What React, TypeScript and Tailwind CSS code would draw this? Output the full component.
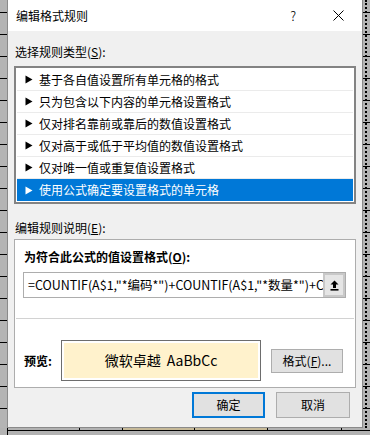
import React from "react";

const FONT = { fontFamily: '"Noto Sans CJK SC", "Microsoft YaHei", sans-serif' };

const items = [
  "基于各自值设置所有单元格的格式",
  "只为包含以下内容的单元格设置格式",
  "仅对排名靠前或靠后的数值设置格式",
  "仅对高于或低于平均值的数值设置格式",
  "仅对唯一值或重复值设置格式",
  "使用公式确定要设置格式的单元格",
];

function Tri({ white }: { white?: boolean }) {
  return (
    <svg width="8" height="9" viewBox="0 0 8 9" className="shrink-0">
      <polygon points="0.5,0.5 7.5,4.5 0.5,8.5" fill={white ? "#ffffff" : "#000000"} />
    </svg>
  );
}

export default function App() {
  return (
    <div
      className="w-[370px] h-[435px] bg-[#b2b2b2] flex flex-col overflow-hidden text-[12px] text-black"
      style={FONT}
    >
      <div className="flex h-[428px]">
        {/* left sheet strip */}
        <div className="w-[7px] h-full bg-[repeating-linear-gradient(to_bottom,transparent_0,transparent_12px,#000_12px,#000_13px,transparent_13px,transparent_22px)] bg-[#b4b4b4]" />
        {/* dialog */}
        <div className="w-[356px] h-full flex flex-col border-x border-b border-[#8a8a8a] bg-[#f0f0f0]">
          {/* title bar */}
          <div className="h-[31px] bg-white flex items-center pl-[8px] pr-[18px]">
            <span className="leading-none">编辑格式规则</span>
            <span className="ml-auto mr-[37px] text-[13px] leading-none font-light">?</span>
            <svg width="11" height="11" viewBox="0 0 11 11">
              <path d="M0.5 0.5 L10.5 10.5 M10.5 0.5 L0.5 10.5" stroke="#000" strokeWidth="1" />
            </svg>
          </div>
          {/* body */}
          <div className="flex flex-col pl-[6px]">
            <div className="mt-[11px] h-[20px] leading-[20px] pl-[1px]">
              选择规则类型(<span className="underline">S</span>):
            </div>
            <div className="mt-[4px] w-[342px] border-2 border-[#838383] bg-white p-[1px] flex flex-col">
              {items.map((t, i) => {
                const sel = i === items.length - 1;
                return (
                  <div
                    key={t}
                    className={
                      sel
                        ? "h-[22px] flex items-center gap-[6px] pl-[8px] bg-[#0078d7] text-white"
                        : "h-[22px] flex items-center gap-[6px] pl-[8px] border-b border-[#ebebeb]"
                    }
                  >
                    <Tri white={sel} />
                    <span className="leading-none">{t}</span>
                  </div>
                );
              })}
            </div>
            <div className="mt-[14px] h-[20px] leading-[20px] pl-[1px]">
              编辑规则说明(<span className="underline">E</span>):
            </div>
            <div className="mt-[1px] w-[342px] h-[149px] border border-[#adadad] bg-white flex flex-col px-[8px]">
              <div className="mt-[7px] h-[20px] leading-[20px] font-bold pl-[1px]">
                为符合此公式的值设置格式(<span className="underline">O</span>):
              </div>
              <div className="mt-[5px] w-[323px] h-[26px] border border-[#adadad] flex items-stretch bg-white">
                <div className="flex-1 overflow-hidden whitespace-nowrap pl-[4px] flex items-center">
                  <span className="leading-none text-[12.5px]">=COUNTIF(A$1,"*编码*")+COUNTIF(A$1,"*数量*")+C</span>
                </div>
                <div className="w-[22px] shrink-0 border-2 border-[#c8c8c8] bg-[#e5e5e5] flex items-center justify-center">
                  <svg width="9" height="11" viewBox="0 0 9 11">
                    <path d="M4.5 0.5 L8.5 4.5 L6 4.5 L6 8 L3 8 L3 4.5 L0.5 4.5 Z" fill="#000" />
                    <rect x="0.5" y="9" width="8" height="1.6" fill="#000" />
                  </svg>
                </div>
              </div>
              <div className="mt-[20px] mx-[-7px] h-px bg-[#d2d2d2]" />
              <div className="mt-[21px] flex items-center">
                <div className="w-[38px] font-bold pl-[1px]">预览:</div>
                <div className="w-[200px] h-[41px] border border-[#6d6d6d] p-[2px] bg-white">
                  <div className="w-full h-full bg-[#fff2cc] flex items-center justify-center text-[14px] gap-[6px]">
                    <span>微软卓越</span>
                    <span>AaBbCc</span>
                  </div>
                </div>
                <div className="ml-[10px] w-[72px] h-[24px] border border-[#adadad] bg-[#e1e1e1] flex items-center justify-center">
                  格式(<span className="underline">F</span>)...
                </div>
              </div>
            </div>
            <div className="mt-[4px] flex justify-end gap-[11px] pr-[12px]">
              <div className="w-[73px] h-[26px] border-2 border-[#0078d7] bg-[#e1e1e1] flex items-center justify-center">
                确定
              </div>
              <div className="w-[74px] h-[26px] border border-[#adadad] bg-[#e1e1e1] flex items-center justify-center">
                取消
              </div>
            </div>
          </div>
        </div>
        {/* right sheet strip */}
        <div className="w-[7px] h-full flex bg-[repeating-linear-gradient(to_bottom,transparent_0,transparent_12px,#000_12px,#000_13px,transparent_13px,transparent_22px)] bg-[#b4b4b4]">
          <div className="ml-[2px] w-[2px] h-full border-l-2 border-dotted border-black" />
        </div>
      </div>
      {/* bottom sheet strip */}
      <div className="h-[7px] flex">
        <div className="w-[8px] border-r border-black" />
        <div className="w-[72px] border-r border-black border-b border-b-black h-[3px]" />
        <div className="w-[43px] border-r border-black h-[3px] border-b border-b-black" />
        <div className="w-[72px] border-r border-black h-[3px] bg-[#c6b998] border-b border-b-black" />
        <div className="w-[73px] border-r border-black h-[3px] bg-[#c6b998] border-b border-b-black" />
        <div className="w-[74px] border-r border-black h-[3px] border-b border-b-black" />
        <div className="flex-1 h-[3px] border-b border-black" />
      </div>
    </div>
  );
}
